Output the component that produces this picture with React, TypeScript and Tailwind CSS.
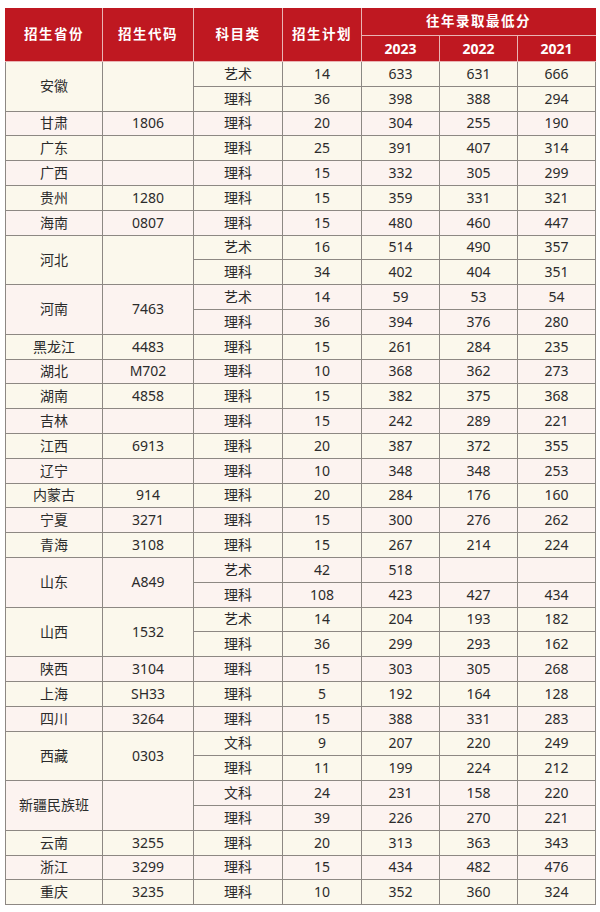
import React from "react";

type Row = { sub: string; plan: string; s23: string; s22: string; s21: string };
type Group = { prov: string; code: string; rows: Row[] };

const r = (sub: string, plan: string, s23: string, s22: string, s21: string): Row => ({ sub, plan, s23, s22, s21 });

const data: Group[] = [
  { prov: "安徽", code: "", rows: [r("艺术", "14", "633", "631", "666"), r("理科", "36", "398", "388", "294")] },
  { prov: "甘肃", code: "1806", rows: [r("理科", "20", "304", "255", "190")] },
  { prov: "广东", code: "", rows: [r("理科", "25", "391", "407", "314")] },
  { prov: "广西", code: "", rows: [r("理科", "15", "332", "305", "299")] },
  { prov: "贵州", code: "1280", rows: [r("理科", "15", "359", "331", "321")] },
  { prov: "海南", code: "0807", rows: [r("理科", "15", "480", "460", "447")] },
  { prov: "河北", code: "", rows: [r("艺术", "16", "514", "490", "357"), r("理科", "34", "402", "404", "351")] },
  { prov: "河南", code: "7463", rows: [r("艺术", "14", "59", "53", "54"), r("理科", "36", "394", "376", "280")] },
  { prov: "黑龙江", code: "4483", rows: [r("理科", "15", "261", "284", "235")] },
  { prov: "湖北", code: "M702", rows: [r("理科", "10", "368", "362", "273")] },
  { prov: "湖南", code: "4858", rows: [r("理科", "15", "382", "375", "368")] },
  { prov: "吉林", code: "", rows: [r("理科", "15", "242", "289", "221")] },
  { prov: "江西", code: "6913", rows: [r("理科", "20", "387", "372", "355")] },
  { prov: "辽宁", code: "", rows: [r("理科", "10", "348", "348", "253")] },
  { prov: "内蒙古", code: "914", rows: [r("理科", "20", "284", "176", "160")] },
  { prov: "宁夏", code: "3271", rows: [r("理科", "15", "300", "276", "262")] },
  { prov: "青海", code: "3108", rows: [r("理科", "15", "267", "214", "224")] },
  { prov: "山东", code: "A849", rows: [r("艺术", "42", "518", "", ""), r("理科", "108", "423", "427", "434")] },
  { prov: "山西", code: "1532", rows: [r("艺术", "14", "204", "193", "182"), r("理科", "36", "299", "293", "162")] },
  { prov: "陕西", code: "3104", rows: [r("理科", "15", "303", "305", "268")] },
  { prov: "上海", code: "SH33", rows: [r("理科", "5", "192", "164", "128")] },
  { prov: "四川", code: "3264", rows: [r("理科", "15", "388", "331", "283")] },
  { prov: "西藏", code: "0303", rows: [r("文科", "9", "207", "220", "249"), r("理科", "11", "199", "224", "212")] },
  { prov: "新疆民族班", code: "", rows: [r("文科", "24", "231", "158", "220"), r("理科", "39", "226", "270", "221")] },
  { prov: "云南", code: "3255", rows: [r("理科", "20", "313", "363", "343")] },
  { prov: "浙江", code: "3299", rows: [r("理科", "15", "434", "482", "476")] },
  { prov: "重庆", code: "3235", rows: [r("理科", "10", "352", "360", "324")] },
];

const td = "border border-[#8d8883] text-center align-middle p-0 h-[24.8px] leading-none";
const th = "border border-[#e9b4b4] text-center align-middle p-0 font-bold text-white leading-none";

export default function App() {
  return (
    <div
      className="w-[600px] h-[912px] bg-white pt-[8px] pl-[5px]"
      style={{ fontFamily: '"Noto Sans", "Noto Sans CJK SC", sans-serif' }}
    >
      <table className="border-collapse table-fixed w-[590px] text-[14px] text-[#2b2b2b]">
        <colgroup>
          <col className="w-[97px]" />
          <col className="w-[91px]" />
          <col className="w-[89px]" />
          <col className="w-[79px]" />
          <col className="w-[78px]" />
          <col className="w-[78px]" />
          <col className="w-[78px]" />
        </colgroup>
        <thead className="bg-[#bf1821]">
          <tr className="h-[27px]">
            <th rowSpan={2} className={`${th} text-[13.5px] tracking-[1.5px] border-l-[#bf1821] border-t-[#bf1821]`}>招生省份</th>
            <th rowSpan={2} className={`${th} text-[13.5px] tracking-[1.5px] border-t-[#bf1821]`}>招生代码</th>
            <th rowSpan={2} className={`${th} text-[13.5px] tracking-[1.5px] border-t-[#bf1821]`}>科目类</th>
            <th rowSpan={2} className={`${th} text-[13.5px] tracking-[1.5px] border-t-[#bf1821]`}>招生计划</th>
            <th colSpan={3} className={`${th} text-[13.5px] tracking-[1.5px] border-t-[#bf1821] border-r-[#bf1821]`}>往年录取最低分</th>
          </tr>
          <tr className="h-[26px]">
            <th className={`${th} text-[14px]`}>2023</th>
            <th className={`${th} text-[14px]`}>2022</th>
            <th className={`${th} text-[14px] border-r-[#bf1821]`}>2021</th>
          </tr>
        </thead>
        <tbody>
          {data.map((g, gi) => {
            const bg = gi % 2 === 0 ? "bg-[#fbf8ec]" : "bg-[#fcf3f0]";
            return g.rows.map((row, ri) => (
              <tr key={`${gi}-${ri}`} className={bg}>
                {ri === 0 && (
                  <td rowSpan={g.rows.length} className={td}>
                    {g.prov}
                  </td>
                )}
                {ri === 0 && (
                  <td rowSpan={g.rows.length} className={td}>
                    {g.code}
                  </td>
                )}
                <td className={td}>{row.sub}</td>
                <td className={td}>{row.plan}</td>
                <td className={td}>{row.s23}</td>
                <td className={td}>{row.s22}</td>
                <td className={td}>{row.s21}</td>
              </tr>
            ));
          })}
        </tbody>
      </table>
    </div>
  );
}
